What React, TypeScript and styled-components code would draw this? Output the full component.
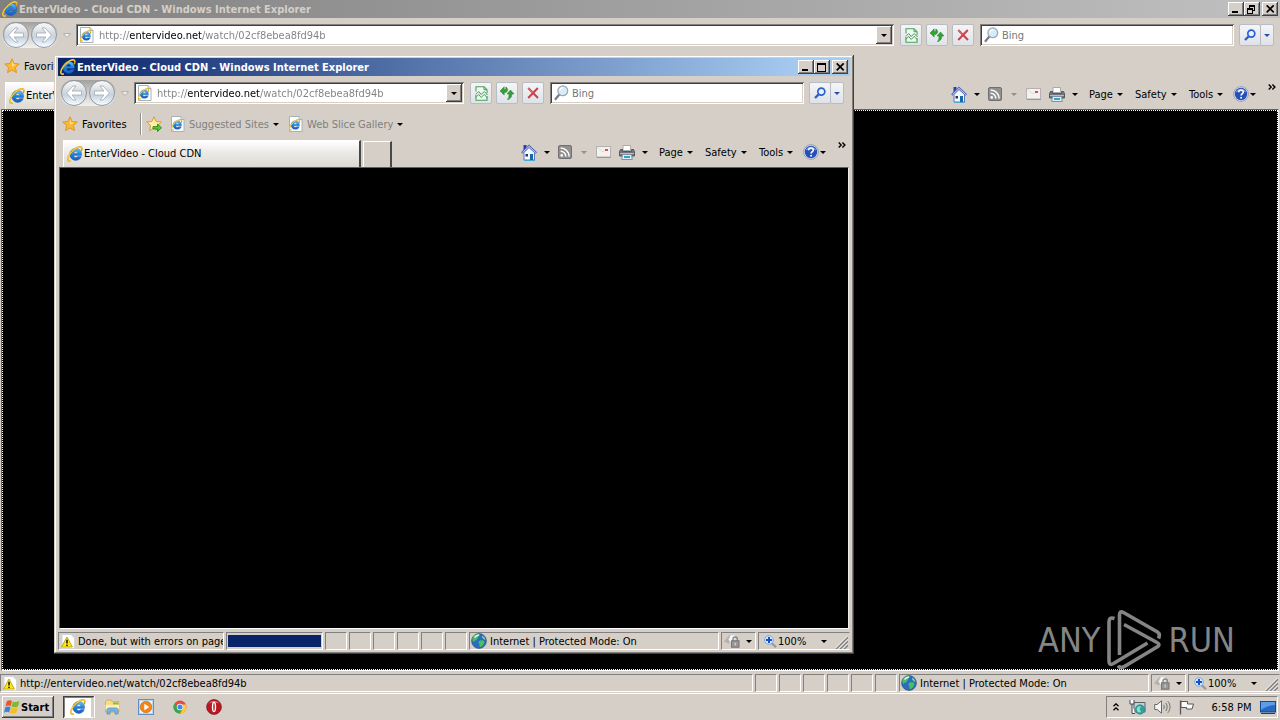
import React, { useId } from "react";
import styled, { createGlobalStyle, css } from "styled-components";

const face = "#d5cfc7";
const uiFont = `"DejaVu Sans Condensed", Tahoma, "DejaVu Sans", sans-serif`;

const GlobalStyle = createGlobalStyle`
  * { box-sizing: border-box; }
  body { margin: 0; background: #000; }
  body, button, input {
    font-family: ${uiFont};
    font-size: 11px;
    line-height: 14px;
    color: #000;
  }
  button, input { border: 0; padding: 0; margin: 0; background: none; outline: 0; border-radius: 0; }
  h2 { margin: 0; }
  svg { display: block; flex: none; }
`;

const raised = css`
  box-shadow: inset -1px -1px #404040, inset 1px 1px #fff, inset -2px -2px #808080;
`;

/* ---------- icons ---------- */

const IeGlyph = () => {
  const id = useId();
  return (
    <>
      <defs>
        <linearGradient id={id} x1="0" y1="0" x2="0" y2="1">
          <stop offset="0" stopColor="#64ccfa" />
          <stop offset="0.5" stopColor="#1c84e0" />
          <stop offset="1" stopColor="#1a5cc0" />
        </linearGradient>
      </defs>
      <path
        d="M8.800 2.400a5.900 5.900 0 0 0-6 6 5.900 5.900 0 0 0 6.100 6c2.700 0 4.700-1.500 5.400-3.800h-3.700c-.4.7-1 1-1.700 1-1.300 0-2.100-.8-2.200-2.200h7.900c.3-4.300-2.100-7-5.800-7zM6.800 7.200c.2-1.200 1-1.900 2.100-1.900 1.100 0 1.800.7 1.900 1.900z"
        fill={`url(#${id})`}
        stroke="#174f9c"
        strokeWidth="0.4"
      />
      <path
        d="M3.800 14.900c-1.700.5-2.900.2-3-1.300C.6 10.300 5 4 10.200 1.600c2.600-1.200 4.600-1 4.700.9 0 .8-.3 1.700-.8 2.600"
        fill="none"
        stroke="#d99c10"
        strokeWidth="1.600"
      />
      <path
        d="M3.800 14.900c-1.700.5-2.900.2-3-1.300C.6 10.300 5 4 10.200 1.600c2.600-1.200 4.600-1 4.700.9"
        fill="none"
        stroke="#ffe050"
        strokeWidth="1"
      />
    </>
  );
};

const IeIcon = ({ size = 16 }: { size?: number }) => (
  <svg width={size} height={size} viewBox="0 0 16 16"><IeGlyph /></svg>
);

const PageIcon = () => (
  <svg width="15" height="16" viewBox="0 0 15 16">
    <path d="M1.500.5h9.500l3 3v12h-12.500z" fill="#fff" stroke="#a8b0b8" />
    <path d="M11 .5v3h3" fill="#dde3ea" stroke="#a8b0b8" />
    <g transform="translate(1 3) scale(.72)"><IeGlyph /></g>
  </svg>
);

const Star = ({ add }: { add?: boolean }) => (
  <svg width="16" height="16" viewBox="0 0 16 16">
    <path
      d="M8 .8l2.100 4.700 5.200.5-3.900 3.500 1.100 5.100L8 12l-4.500 2.600 1.100-5.100L.7 6l5.200-.5z"
      fill={add ? "#fff2b0" : "#fcb830"}
      stroke="#e09828"
    />
    <path d="M8 3l1.300 3.400 3 .3L8 8.500z" fill="#ffe890" />
    {add && <path d="M7 10.500h4.500V8l4 3.800-4 3.700V13H7z" fill="#58c838" stroke="#208018" strokeWidth="0.8" />}
  </svg>
);

const Caret = ({ color = "#000", w = 6 }: { color?: string; w?: number }) => (
  <svg width={w} height="3" viewBox="0 0 6 3"><path d="M0 0h6L3 3z" fill={color} /></svg>
);

const HomeIcon = () => (
  <svg width="16" height="17" viewBox="0 0 16 17">
    <path d="M2.500 1h3v4l-3 2z" fill="#2a3cb8" />
    <path d="M3 8.500L8 3.500l5.500 5v7.500H3z" fill="#f4f7ff" stroke="#5c78c0" />
    <path d="M.8 9L8 2l7.400 7" fill="none" stroke="#5068b8" strokeWidth="2" />
    <path d="M1.600 8.600L8 2.400l6.600 6.200" fill="none" stroke="#c4d0f4" strokeWidth="1" />
    <path d="M4.500 10h2.500v2.500H4.500z" fill="#283858" />
    <path d="M9 10h3v6H9z" fill="#1868a8" />
    <path d="M3 16.500h11" stroke="#50a8d0" />
  </svg>
);

const FeedIcon = () => (
  <svg width="14" height="14" viewBox="0 0 14 14">
    <rect x="0.500" y="0.500" width="13" height="13" rx="1.500" fill="#909090" stroke="#707070" />
    <circle cx="3.700" cy="10.400" r="1.300" fill="#fff" />
    <path d="M2.600 6.200a5.200 5.200 0 0 1 5.200 5.300M2.600 3a8.500 8.500 0 0 1 8.500 8.500" fill="none" stroke="#fff" strokeWidth="1.500" />
  </svg>
);

const MailIcon = () => (
  <svg width="15" height="12" viewBox="0 0 15 12">
    <rect x="0.500" y="0.500" width="14" height="10.500" fill="#f4f2ee" stroke="#b4b0b4" />
    <path d="M1 1l6 5 4-3" fill="none" stroke="#dedada" />
    <rect x="9" y="3" width="3" height="2" fill="#e05048" />
    <path d="M1 11.500h14" stroke="#9894a0" />
  </svg>
);

const PrinterIcon = () => (
  <svg width="16" height="15" viewBox="0 0 16 15">
    <path d="M4 .5h7.500v5H4z" fill="#fff" stroke="#aaa" />
    <path d="M1.500 4.500h2v2h9v-2h2l1 2V11H.5V6.500z" fill="#70747c" stroke="#54585e" />
    <path d="M1 8.500h14" stroke="#b8bcc4" />
    <path d="M3.500 9.500h9l.8 5H2.700z" fill="#d8f0fa" stroke="#8090a0" />
    <path d="M5 12h6" stroke="#3aa0d0" strokeWidth="2" />
  </svg>
);

const HelpIcon = () => (
  <svg width="16" height="16" viewBox="0 0 16 16">
    <circle cx="8" cy="8" r="7.400" fill="#d8dcea" stroke="#8c94a8" strokeWidth="0.8" />
    <circle cx="8" cy="8" r="6.200" fill="#2450b8" />
    <path d="M2.600 6.500a5.800 5.800 0 0 1 10.800 0C10 5 6 5 2.600 6.500z" fill="#6c94e0" />
    <path d="M5.700 6.200c0-3 4.800-2.900 4.600-.1-.1 1.500-2.200 1.500-2.200 3.400" fill="none" stroke="#fff" strokeWidth="1.600" />
    <circle cx="8.100" cy="11.700" r="1" fill="#fff" />
  </svg>
);

const ChevronsIcon = () => (
  <svg width="8" height="6" viewBox="0 0 8 6">
    <path d="M.7.500l2.500 2.500L.7 5.500M4.400.500l2.500 2.500-2.500 2.500" fill="none" stroke="#000" strokeWidth="1.400" />
  </svg>
);

const CompatIcon = () => (
  <svg width="13" height="15" viewBox="0 0 13 15">
    <path d="M1 5.500V.7h8l3 3v3.500M1 9v5.300h11V10" fill="#f0faf0" stroke="#48a058" strokeWidth="1.100" />
    <path d="M9 .7v3h3" fill="none" stroke="#48a058" />
    <path d="M.7 8.500l3-3 2.500 3 3-3L12.500 9M.7 11.500l3-3 2.500 3 3-3 3.300 3.300" fill="none" stroke="#48a058" />
  </svg>
);

const RefreshIcon = () => (
  <svg width="14" height="14" viewBox="0 0 14 14">
    <path d="M0 5L4.200.8v2.700h1.600V1c1.500.6 2 2 1.700 3.500C7.300 5.600 6.500 6.200 5.500 6.400H4.200V9z" fill="#35a038" stroke="#238028" strokeWidth="0.500" />
    <path d="M14 8l-3.500-4L7 8h2v.8c0 2-.4 3.400-1.600 5 2.600-.6 4.300-2.400 4.400-5V8z" fill="#35a038" stroke="#238028" strokeWidth="0.500" />
  </svg>
);

const StopIcon = () => (
  <svg width="12" height="12" viewBox="0 0 12 12">
    <path d="M1.200 1l9.800 10M10.800 1L1.200 11" stroke="#cc4048" strokeWidth="2" />
    <path d="M1.200 1l4.600 4.700" stroke="#e88080" strokeWidth="0.800" />
  </svg>
);

const LensIcon = () => (
  <svg width="15" height="16" viewBox="0 0 15 16">
    <path d="M5.300 9.500L1 14.800" stroke="#787c84" strokeWidth="2.200" />
    <circle cx="8.800" cy="5.800" r="4.900" fill="#d8ecf8" stroke="#98a8b4" strokeWidth="1.300" />
    <path d="M6 5.500a3 3 0 0 1 3-2.700" fill="none" stroke="#fff" strokeWidth="1.200" />
  </svg>
);

const GoIcon = () => (
  <svg width="12" height="12" viewBox="0 0 12 12">
    <path d="M4.500 7.500L1 11" stroke="#2860d0" strokeWidth="2.400" />
    <circle cx="7.300" cy="4.600" r="3.500" fill="#e8f2ff" stroke="#2860d0" strokeWidth="1.700" />
  </svg>
);

const WarningIcon = () => (
  <svg width="15" height="15" viewBox="0 0 15 15">
    <path d="M2 .5h9l3.500 3.500v10.500H2z" fill="#fff" stroke="#d0d4dc" />
    <path d="M7 3l5.400 10H1.600z" fill="#ffe620" stroke="#c8ac00" strokeLinejoin="round" />
    <path d="M7 5.800v3.700" stroke="#202000" strokeWidth="1.600" />
    <circle cx="7" cy="11.300" r="0.900" fill="#202000" />
  </svg>
);

const GlobeIcon = () => (
  <svg width="16" height="16" viewBox="0 0 16 16">
    <circle cx="8" cy="8" r="7.400" fill="#2c6cc0" stroke="#305080" strokeWidth="0.700" />
    <path d="M2 4c2-3 5-3.400 7-2.800C8.500 3 7 3.500 6.500 5.500S3 7.500 2.500 9C1 8 1.200 5.500 2 4zM8 8c2-1.500 5-.8 5.500.7-.5 2.500-2.500 5.500-4.500 5.300C8 12.500 9 11 7.500 10z" fill="#48c060" />
    <path d="M11 2.500c2 1 3.200 3 3.300 4.800L11.500 5z" fill="#90dca0" />
    <path d="M3.500 4.500c1.500-2 3-2.400 4.500-2.500" stroke="#d8f8ff" strokeWidth="1.300" fill="none" />
  </svg>
);

const LockIcon = () => (
  <svg width="16" height="14" viewBox="0 0 16 14">
    <path d="M0 7.500L5.500.7l2.500 3-3 5.800z" fill="#b4b0ac" />
    <path d="M4.500 5.500L6.500 1l4-.3 2 3.300L7 9.500z" fill="#f6f6f6" stroke="#c8c8c8" strokeWidth="0.700" />
    <path d="M9 7V5.200a2.200 2.200 0 0 1 4.400 0V7" fill="none" stroke="#888" strokeWidth="1.400" />
    <rect x="7.500" y="6.800" width="7.500" height="6.400" fill="#989898" stroke="#747474" />
    <path d="M11.200 8.500v3" stroke="#ddd" />
  </svg>
);

const ZoomIcon = () => (
  <svg width="13" height="13" viewBox="0 0 13 13">
    <path d="M7.500 8l4.500 4.200" stroke="#a09890" strokeWidth="2.200" />
    <circle cx="5" cy="5" r="4.300" fill="#d4e8ff" stroke="#7ca8dc" />
    <path d="M5 2v6M2 5h6" stroke="#1850c0" strokeWidth="2" />
  </svg>
);

const GripIcon = () => (
  <svg width="13" height="13" viewBox="0 0 13 13">
    <path d="M1 13L13 1M5 13l8-8M9 13l4-4" stroke="#808080" strokeWidth="1.600" />
    <path d="M0 12.500L12.500 0M4 12.500L13 3.500M8 12.500l5-5" stroke="#fff" strokeWidth="0.900" />
  </svg>
);

const ArrowIcon = ({ flip }: { flip?: boolean }) => (
  <svg width="18" height="16" viewBox="0 0 18 16">
    <path
      d={flip ? "M16.500 8L10 1H7l4 5H1.500v4H11l-4 5h3z" : "M1.500 8L8 1h3L7 6h9.500v4H7l4 5H8z"}
      fill="#fff"
      stroke="#a4b0bc"
      strokeWidth="0.900"
    />
  </svg>
);

const WindowsFlag = () => (
  <svg width="17" height="16" viewBox="0 0 17 16">
    <path d="M2.800 2.200C4.700.9 6.300 1 8 2L6.700 7.200C5 6.200 3.400 6.300 1.400 7.500z" fill="#e8582c" />
    <path d="M8.800 2.400c1.800 1 3.700 1 6.700-.3L14 7.500c-2.500 1.100-4.600 1.100-6.500.1z" fill="#80b838" />
    <path d="M1.200 8.400c2-1.200 3.600-1.200 5.300-.2L5.100 13.400C3.500 12.400 1.900 12.500 0 13.700z" fill="#4080d0" />
    <path d="M7.300 8.600c1.900 1 3.900 1 6.500-.1l-1.500 5.300c-2.600 1-4.600.9-6.400-.1z" fill="#f4c020" />
  </svg>
);

const FolderIcon = () => (
  <svg width="17" height="16" viewBox="0 0 17 16">
    <path d="M1.500 13V2.500L3 1h4l1.500 1.700h6.300V13z" fill="#f4dc88" stroke="#c8a850" strokeWidth="0.800" />
    <path d="M9 3.500h5v2H9z" fill="#88b848" />
    <path d="M1.500 5.800h13.500v4.400H1.500z" fill="#fcefb4" />
    <path d="M3 15v-3.500C3 9.500 4 9 5.500 9h6c1.500 0 2.500.5 2.500 2.500V15h-3v-3H6v3z" fill="#78b8e8" stroke="#4888c0" strokeWidth="0.700" />
  </svg>
);

const PlayerIcon = () => (
  <svg width="16" height="16" viewBox="0 0 16 16">
    <rect x="0.500" y="0.500" width="15" height="15" fill="#b8d8f4" stroke="#6490c4" />
    <rect x="2" y="2" width="12" height="12" fill="#e8f4ff" />
    <circle cx="8" cy="8" r="5.800" fill="#f48418" stroke="#d06808" strokeWidth="0.600" />
    <path d="M6.300 4.800l5 3.200-5 3.200z" fill="#fff" />
  </svg>
);

const ChromeIcon = () => (
  <svg width="14" height="14" viewBox="0 0 14 14">
    <circle cx="7" cy="7" r="6.500" fill="#e84c3c" />
    <path d="M1.400 3.700A6.500 6.500 0 0 0 7 13.500l3.100-5.200L7 7z" fill="#38a850" />
    <path d="M12.900 4.400A6.500 6.500 0 0 1 7 13.500l3-5V4.400z" fill="#fccc30" />
    <circle cx="7" cy="7" r="3.200" fill="#fff" />
    <circle cx="7" cy="7" r="2.500" fill="#4484ec" />
  </svg>
);

const OperaIcon = () => (
  <svg width="16" height="16" viewBox="0 0 16 16">
    <circle cx="8" cy="8" r="7.400" fill="#b81820" stroke="#801018" strokeWidth="0.700" />
    <path d="M2.500 4.500a7 7 0 0 1 11 0C10 3 6 3 2.500 4.500z" fill="#e87070" />
    <ellipse cx="8" cy="8" rx="2.200" ry="5.200" fill="#fff" />
    <ellipse cx="8" cy="8" rx="0.800" ry="4" fill="#c02830" />
  </svg>
);

const TrayExpandIcon = () => (
  <svg width="6" height="8" viewBox="0 0 6 8">
    <path d="M.5 3.200L3 .8l2.500 2.400M.5 7.200L3 4.800l2.500 2.400" fill="none" stroke="#000" strokeWidth="1.300" />
  </svg>
);

const NetworkIcon = () => (
  <svg width="17" height="16" viewBox="0 0 17 16">
    <path d="M5 3.500h11v9.500H5z" fill="#b8d4dc" stroke="#586068" />
    <path d="M1 1v4h4V1M3 5v9.500h3" fill="#fff" stroke="#484848" />
    <circle cx="11" cy="10.500" r="4.700" fill="#30a0a0" stroke="#287878" strokeWidth="0.600" />
    <path d="M8 9c1-2 3-2 4-1.500L10.500 10 12 13l-2 .5C8 12.500 7.500 11 8 9z" fill="#98e0b8" />
  </svg>
);

const SpeakerIcon = () => (
  <svg width="17" height="14" viewBox="0 0 17 14">
    <path d="M.7 4.500h2.500L7.500.8v12.400L3.200 9.500H.7z" fill="#f4f4f4" stroke="#686868" />
    <path d="M9.500 4.800c1 1.300 1 3.100 0 4.400M11.700 3c2 2.300 2 5.700 0 8M13.800 1.200c3 3.400 3 8.200 0 11.600" fill="none" stroke="#707070" />
  </svg>
);

const FlagIcon = () => (
  <svg width="16" height="15" viewBox="0 0 16 15">
    <path d="M1.500.5v14" stroke="#585858" strokeWidth="1.300" />
    <path d="M2 1.500h6.500V4h6L13 9H7.500V7.500H2z" fill="#fafafa" stroke="#585858" />
  </svg>
);

const DesktopIcon = () => (
  <svg width="16" height="13" viewBox="0 0 16 13">
    <rect x="0.500" y="0.500" width="15" height="10.500" fill="#2868c0" stroke="#184890" />
    <path d="M1 1h14v3C10 4 5 6 1 9z" fill="#5c9ce8" />
    <path d="M1 12.500h14" stroke="#203c68" />
  </svg>
);

const AnyRunMark = () => (
  <svg width="56" height="62" viewBox="0 0 56 62">
    <g fill="none" stroke="#858585" strokeWidth="3.600" strokeLinejoin="round">
      <path d="M8.500 9.500Q3 7.500 3 13v39q0 5 4.500 2.500L41.500 34" />
      <path d="M13.500 46V6q0-4.500 4-2.500L51.500 23q3 2 1 6.500" />
      <path d="M18 15.500L51 33.500q4 2 0 4.500L20 56.500q-6 4-7.500 0" />
    </g>
  </svg>
);

/* ---------- window chrome ---------- */

const Label = styled.span`
  padding-top: 2px;
  white-space: nowrap;
`;

const Frame = styled.section<{ $floating?: boolean }>`
  display: flex;
  flex-direction: column;
  flex: 1;
  min-width: 0;
  background: ${face};
  ${(p) =>
    p.$floating &&
    css`
      position: absolute;
      left: 54px;
      top: 55px;
      width: 800px;
      height: 599px;
      padding: 3px 4px 4px;
      box-shadow: inset -1px -1px #404040, inset 1px 1px ${face}, inset -2px -2px #808080, inset 2px 2px #fff;
    `}
`;

const TitleBar = styled.header<{ $active?: boolean }>`
  display: flex;
  align-items: center;
  height: 18px;
  padding: 0 2px;
  background: ${(p) =>
    p.$active ? "linear-gradient(90deg, #0a246a, #a6caf0 94%)" : "linear-gradient(90deg, #808080, #c0c0c0)"};
  color: ${(p) => (p.$active ? "#fff" : face)};
`;

const Title = styled.h2`
  flex: 1;
  padding: 2px 0 0 1px;
  font-size: 11px;
  line-height: 14px;
  font-weight: 700;
  white-space: nowrap;
`;

const CaptionButton = styled.button<{ $apart?: boolean }>`
  display: grid;
  place-items: center;
  width: 16px;
  height: 14px;
  margin-left: ${(p) => (p.$apart ? 2 : 0)}px;
  background: ${face};
  ${raised}
`;

const NavRow = styled.div`
  display: flex;
  align-items: center;
  height: 34px;
  padding: 0 6px 0 2px;
`;

const Travel = styled.div`
  display: flex;
  gap: 2px;
  padding: 0 1px;
  border-radius: 14px;
  background: linear-gradient(#a0a0a0, ${face} 50%, #f0f0ee);
`;

const TravelButton = styled.button`
  display: grid;
  place-items: center;
  width: 26px;
  height: 26px;
  border: 1px solid #8c98a4;
  border-radius: 50%;
  background: linear-gradient(#f4f4f4 8%, #d4d8dc 45%, #c8d4e0 60%, #f8fcff);
`;

const RecentButton = styled.button`
  display: grid;
  place-items: center;
  width: 18px;
  height: 20px;
`;

const Field = styled.label<{ $fixed?: boolean }>`
  display: flex;
  align-items: center;
  height: 22px;
  padding: 2px;
  background: #fff;
  box-shadow: inset 1px 1px #808080, inset -1px -1px #fff, inset 2px 2px #404040, inset -2px -2px ${face};
  ${(p) =>
    p.$fixed
      ? css`
          flex: 0 0 254px;
          margin: 0 5px 0 6px;
          padding-left: 4px;
        `
      : css`
          flex: 1;
          min-width: 0;
          padding-left: 3px;
        `}
`;

const AddressInput = styled.input`
  flex: 1;
  min-width: 0;
  height: 18px;
  padding-top: 1px;
  margin-left: 5px;
  color: #808080;
  background: linear-gradient(90deg, #808080 30px, #000 30px, #000 103px, #808080 103px);
  background-clip: text;
  -webkit-background-clip: text;
  -webkit-text-fill-color: transparent;
`;

const SearchInput = styled.input`
  flex: 1;
  min-width: 0;
  height: 18px;
  padding-top: 1px;
  margin-left: 3px;
  &::placeholder {
    color: #777;
    opacity: 1;
  }
`;

const DropButton = styled.button`
  display: grid;
  place-items: center;
  width: 16px;
  height: 18px;
  background: ${face};
  ${raised}
`;

const ToolGroup = styled.div`
  display: flex;
  gap: 4px;
  padding-left: 6px;
`;

const ToolButton = styled.button<{ $w?: number }>`
  display: grid;
  place-items: center;
  width: ${(p) => p.$w ?? 22}px;
  height: 22px;
  border: 1px solid #b8bcc4;
  border-radius: 2px;
  background: linear-gradient(#f4f5f7, #dfe2e8);
`;

const GoGroup = styled.div`
  display: flex;
  & > button + button {
    margin-left: -1px;
  }
`;

const FavoritesRow = styled.div`
  display: flex;
  align-items: center;
  height: 28px;
  padding-left: 4px;
`;

const FavButton = styled.button<{ $dim?: boolean; $w?: number }>`
  display: flex;
  align-items: center;
  gap: 4px;
  width: ${(p) => (p.$w ? `${p.$w}px` : "auto")};
  color: ${(p) => (p.$dim ? "#808080" : "#000")};
  white-space: nowrap;
`;

const Divider = styled.span`
  width: 2px;
  height: 22px;
  margin-right: 4px;
  border-left: 1px solid #909090;
  border-right: 1px solid #fff;
`;

const TabRow = styled.div`
  display: flex;
  height: 29px;
  padding-left: 5px;
  gap: 2px;
`;

const Tab = styled.button`
  display: flex;
  align-items: center;
  gap: 1px;
  align-self: flex-end;
  width: 298px;
  height: 27px;
  padding-left: 3px;
  border: 1px solid #fff;
  border-right: 2px solid #484848;
  border-bottom: 0;
  background: linear-gradient(#fff, #eceae6 45%, #dcd9d2);
`;

const NewTab = styled.button`
  align-self: flex-end;
  width: 29px;
  height: 26px;
  border: 1px solid #fff;
  border-right: 2px solid #484848;
  border-bottom: 0;
  background: ${face};
`;

const CommandBar = styled.div`
  display: flex;
  align-items: center;
  height: 28px;
  margin-left: auto;
`;

const Command = styled.button<{ $w: number; $gap?: number }>`
  display: flex;
  align-items: center;
  gap: ${(p) => p.$gap ?? 4}px;
  width: ${(p) => p.$w}px;
  height: 20px;
  white-space: nowrap;
`;

const OverflowButton = styled.button`
  display: block;
  align-self: flex-start;
  width: 12px;
  height: 14px;
`;

const Content = styled.main<{ $focused?: boolean }>`
  flex: 1;
  margin: 0 1px;
  border: 1px solid #606060;
  border-right-color: #f0eeea;
  border-bottom-color: #fff;
  background: #000;
  outline: ${(p) => (p.$focused ? "1px dotted #fff" : "0")};
  outline-offset: -2px;
`;

const StatusBar = styled.footer`
  display: flex;
  gap: 2px;
  height: 21px;
  padding-top: 3px;
`;

const Pane = styled.div<{ $w?: number; $last?: boolean }>`
  display: flex;
  align-items: center;
  flex: ${(p) => (p.$w ? `0 0 ${p.$w}px` : "1 1 0")};
  min-width: 0;
  overflow: hidden;
  gap: 3px;
  padding: 0 1px;
  border: 1px solid #808080;
  border-right-color: ${(p) => (p.$last ? face : "#fff")};
  border-bottom-color: #fff;
  white-space: nowrap;
`;

const PaneButton = styled.button<{ $wide?: boolean }>`
  display: flex;
  align-items: center;
  gap: ${(p) => (p.$wide ? 1 : 6)}px;
  padding-left: ${(p) => (p.$wide ? 4 : 1)}px;
`;

const ZoomLabel = styled(Label)`
  width: 42px;
  text-align: left;
`;

const Grip = styled.span`
  margin-left: auto;
  align-self: flex-end;
`;

const Progress = styled.div`
  flex: 1;
  height: 12px;
  background: #0a246a;
`;

type BrowserProps = { floating?: boolean; status: string; loading?: boolean };

const Browser = ({ floating, status, loading }: BrowserProps) => (
  <Frame $floating={floating} aria-label="Windows Internet Explorer">
    <TitleBar $active={floating}>
      <IeIcon />
      <Title>EnterVideo - Cloud CDN - Windows Internet Explorer</Title>
      <CaptionButton aria-label="Minimize">
        <svg width="10" height="8" viewBox="0 0 10 8"><path d="M1 6h6v2H1z" /></svg>
      </CaptionButton>
      <CaptionButton aria-label={floating ? "Maximize" : "Restore"}>
        {floating ? (
          <svg width="10" height="9" viewBox="0 0 10 9">
            <path d="M0 0h9v9H0zM1 2v6h7V2z" fillRule="evenodd" />
          </svg>
        ) : (
          <svg width="10" height="9" viewBox="0 0 10 9">
            <path d="M2 0h6v6H6V5h1V2H3v1H2zM0 3h6v6H0zM1 5v3h4V5z" fillRule="evenodd" />
          </svg>
        )}
      </CaptionButton>
      <CaptionButton $apart aria-label="Close">
        <svg width="9" height="8" viewBox="0 0 9 8"><path d="M.7.300l7 7M7.700.300l-7 7" stroke="#000" strokeWidth="1.700" /></svg>
      </CaptionButton>
    </TitleBar>

    <NavRow>
      <Travel>
        <TravelButton aria-label="Back"><ArrowIcon /></TravelButton>
        <TravelButton aria-label="Forward"><ArrowIcon flip /></TravelButton>
      </Travel>
      <RecentButton aria-label="Recent pages">
        <svg width="8" height="5" viewBox="0 0 8 5"><path d="M.5.500h7L4 4.500z" fill="#eee" stroke="#a8a8a8" strokeWidth="0.800" /></svg>
      </RecentButton>
      <Field>
        <PageIcon />
        <AddressInput aria-label="Address" defaultValue="http://entervideo.net/watch/02cf8ebea8fd94b" />
        <DropButton aria-label="Show addresses"><Caret w={8} /></DropButton>
      </Field>
      <ToolGroup>
        <ToolButton aria-label="Compatibility view"><CompatIcon /></ToolButton>
        <ToolButton aria-label="Refresh"><RefreshIcon /></ToolButton>
        <ToolButton aria-label="Stop"><StopIcon /></ToolButton>
      </ToolGroup>
      <Field $fixed>
        <LensIcon />
        <SearchInput aria-label="Search" placeholder="Bing" />
      </Field>
      <GoGroup>
        <ToolButton aria-label="Search"><GoIcon /></ToolButton>
        <ToolButton $w={14} aria-label="Search options"><Caret color="#2850a0" /></ToolButton>
      </GoGroup>
    </NavRow>

    <FavoritesRow>
      <FavButton $w={78}><Star /><Label>Favorites</Label></FavButton>
      <Divider />
      <FavButton $w={24} aria-label="Add to favorites"><Star add /></FavButton>
      <FavButton $dim $w={118}><PageIcon /><Label>Suggested Sites</Label><Caret color="#000" /></FavButton>
      <FavButton $dim><PageIcon /><Label>Web Slice Gallery</Label><Caret color="#000" /></FavButton>
    </FavoritesRow>

    <TabRow>
      <Tab><IeIcon /><span>EnterVideo - Cloud CDN</span></Tab>
      <NewTab aria-label="New tab" />
      <CommandBar>
        <Command $w={37} $gap={7} aria-label="Home"><HomeIcon /><Caret /></Command>
        <Command $w={38} $gap={9} aria-label="Feeds"><FeedIcon /><Caret color="#909090" /></Command>
        <Command $w={23} aria-label="Read mail"><MailIcon /></Command>
        <Command $w={40} $gap={7} aria-label="Print"><PrinterIcon /><Caret /></Command>
        <Command $w={46}><Label>Page</Label><Caret /></Command>
        <Command $w={54}><Label>Safety</Label><Caret /></Command>
        <Command $w={44}><Label>Tools</Label><Caret /></Command>
        <Command $w={35} $gap={1} aria-label="Help"><HelpIcon /><Caret /></Command>
        <OverflowButton aria-label="More commands"><ChevronsIcon /></OverflowButton>
      </CommandBar>
    </TabRow>

    <Content $focused={!floating} />

    <StatusBar>
      <Pane><WarningIcon /><Label>{status}</Label></Pane>
      {loading && <Pane $w={97}><Progress role="progressbar" aria-label="Loading" /></Pane>}
      {Array.from({ length: 6 }, (_, i) => <Pane key={i} $w={22} />)}
      <Pane $w={250}><GlobeIcon /><Label>Internet | Protected Mode: On</Label></Pane>
      <Pane $w={35}><PaneButton aria-label="Protection"><LockIcon /><Caret /></PaneButton></Pane>
      <Pane $w={92} $last>
        <PaneButton $wide><ZoomIcon /><ZoomLabel>100%</ZoomLabel><Caret /></PaneButton>
        <Grip><GripIcon /></Grip>
      </Pane>
    </StatusBar>
  </Frame>
);

/* ---------- desktop ---------- */

const Desktop = styled.div`
  position: relative;
  display: flex;
  flex-direction: column;
  min-height: 100vh;
  overflow: hidden;
`;

const Watermark = styled.div`
  position: absolute;
  right: 45px;
  bottom: 49px;
  display: flex;
  align-items: center;
  gap: 6px;
  font-size: 34px;
  line-height: 62px;
  color: #858585;
`;

const Taskbar = styled.nav`
  display: flex;
  align-items: center;
  height: 28px;
  padding: 2px 2px 0;
  background: ${face};
  box-shadow: inset 0 1px ${face}, inset 0 2px #fff;
`;

const StartButton = styled.button`
  display: flex;
  align-items: center;
  width: 52px;
  height: 22px;
  padding-left: 2px;
  margin-right: 9px;
  font-weight: 700;
  ${raised}
`;

const TaskButton = styled.button<{ $active?: boolean }>`
  display: grid;
  place-items: center;
  width: ${(p) => (p.$active ? 32 : 34)}px;
  height: 22px;
  ${(p) =>
    p.$active &&
    css`
      padding-right: 2px;
      border-right: 1px solid #fff;
      background: #fff;
      box-shadow: inset 1px 1px #404040, inset -1px 0 ${face}, inset 0 -1px #fff, inset 2px 2px #808080, inset -3px 0 ${face};
    `}
`;

const Tray = styled.div`
  display: flex;
  align-items: center;
  width: 172px;
  height: 22px;
  margin-left: auto;
  padding: 0 1px 0 6px;
  border: 1px solid #808080;
  border-right-color: #fff;
  border-bottom-color: #fff;
`;

const TrayButton = styled.button`
  display: block;
  margin-right: 8px;
  &:first-child {
    margin-right: 10px;
  }
  &:last-child {
    margin: 0 0 0 auto;
  }
`;

const Clock = styled.time`
  margin-left: auto;
  padding-top: 2px;
  white-space: nowrap;
`;

export default function App() {
  return (
    <>
      <GlobalStyle />
      <Desktop>
        <Browser status="http://entervideo.net/watch/02cf8ebea8fd94b" />
        <Browser floating loading status="Done, but with errors on page." />
        <Taskbar>
          <StartButton><WindowsFlag /><Label>Start</Label></StartButton>
          <TaskButton $active aria-label="Internet Explorer"><IeIcon /></TaskButton>
          <TaskButton aria-label="Explorer"><FolderIcon /></TaskButton>
          <TaskButton aria-label="Media Player"><PlayerIcon /></TaskButton>
          <TaskButton aria-label="Chrome"><ChromeIcon /></TaskButton>
          <TaskButton aria-label="Opera"><OperaIcon /></TaskButton>
          <Tray>
            <TrayButton aria-label="Show hidden icons"><TrayExpandIcon /></TrayButton>
            <TrayButton aria-label="Network"><NetworkIcon /></TrayButton>
            <TrayButton aria-label="Volume"><SpeakerIcon /></TrayButton>
            <TrayButton aria-label="Action center"><FlagIcon /></TrayButton>
            <Clock>6:58 PM</Clock>
            <TrayButton aria-label="Show desktop"><DesktopIcon /></TrayButton>
          </Tray>
        </Taskbar>
        <Watermark>
          <span>ANY</span>
          <AnyRunMark />
          <span>RUN</span>
        </Watermark>
      </Desktop>
    </>
  );
}
